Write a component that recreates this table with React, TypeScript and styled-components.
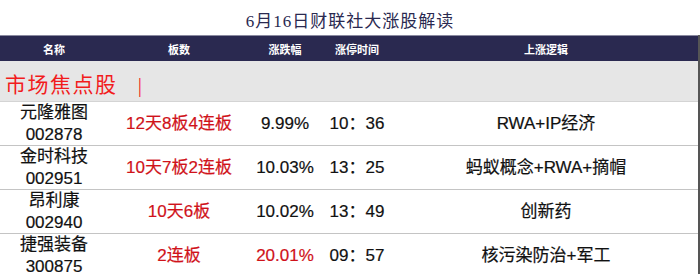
import styled, { createGlobalStyle } from "styled-components";

interface Stock {
  name: string;
  code: string;
  boards: string;
  change: string;
  changeHot?: boolean;
  time: string;
  logic: string;
}

const stocks: Stock[] = [
  { name: "元隆雅图", code: "002878", boards: "12天8板4连板", change: "9.99%", time: "10：36", logic: "RWA+IP经济" },
  { name: "金时科技", code: "002951", boards: "10天7板2连板", change: "10.03%", time: "13：25", logic: "蚂蚁概念+RWA+摘帽" },
  { name: "昂利康", code: "002940", boards: "10天6板", change: "10.02%", time: "13：49", logic: "创新药" },
  { name: "捷强装备", code: "300875", boards: "2连板", change: "20.01%", changeHot: true, time: "09：57", logic: "核污染防治+军工" },
];

const columns = ["名称", "板数", "涨跌幅", "涨停时间", "上涨逻辑"];

function App() {
  return (
    <>
      <GlobalStyle />
      <Page>
        <Title>6月16日财联社大涨股解读</Title>
        <Table>
          <HeaderRow>
            {columns.map((c) => (
              <HeaderCell key={c}>{c}</HeaderCell>
            ))}
          </HeaderRow>
          <SectionRow>市场焦点股&nbsp;&nbsp;&nbsp;|</SectionRow>
          {stocks.map((s) => (
            <Row key={s.code}>
              <Cell>
                {s.name}
                <br />
                {s.code}
              </Cell>
              <Cell red>{s.boards}</Cell>
              <Cell red={s.changeHot}>{s.change}</Cell>
              <Cell>{s.time}</Cell>
              <Cell>{s.logic}</Cell>
            </Row>
          ))}
        </Table>
      </Page>
    </>
  );
}

export default App;

const GlobalStyle = createGlobalStyle`
  html, body {
    margin: 0;
    padding: 0;
    background: #ffffff;
  }
  * {
    box-sizing: border-box;
  }
`;

const Page = styled.div`
  width: 700px;
  height: 274px;
  overflow: hidden;
  background: #ffffff;
`;

const Title = styled.div`
  height: 35px;
  display: flex;
  align-items: center;
  justify-content: center;
  padding-top: 3px;
  font-family: "Liberation Serif", "Noto Sans CJK SC", serif;
  font-size: 17px;
  letter-spacing: 1px;
  color: #2a2950;
`;

const Table = styled.div`
  border-right: 2px solid #555555;
`;

const grid = `
  display: grid;
  grid-template-columns: 108px 142px 70px 74px 1fr;
`;

const HeaderRow = styled.div`
  ${grid}
  height: 26px;
  background: #2a2950;
  border-top: 1px solid #8a8aa0;
  align-items: center;
`;

const HeaderCell = styled.div`
  text-align: center;
  color: #ffffff;
  font-family: "Liberation Sans", "Noto Sans CJK SC", sans-serif;
  font-size: 11px;
  font-weight: bold;
`;

const SectionRow = styled.div`
  height: 41px;
  background: #e6e6e6;
  display: flex;
  align-items: center;
  padding-left: 5px;
  padding-top: 4px;
  font-family: "Liberation Serif", "Noto Sans CJK SC", serif;
  font-size: 21px;
  letter-spacing: 1.5px;
  color: #f21c1c;
  border-bottom: 1px solid #d4d4d4;
`;

const Row = styled.div`
  ${grid}
  align-items: center;
  border-bottom: 1px solid #c4c4c4;
`;

const Cell = styled.div<{ red?: boolean }>`
  text-align: center;
  font-family: "Liberation Sans", "Noto Sans CJK SC", sans-serif;
  font-size: 17px;
  line-height: 21.5px;
  color: ${(p) => (p.red ? "#d0121a" : "#111111")};
  white-space: nowrap;
  -webkit-text-stroke: 0.2px currentColor;
`;
